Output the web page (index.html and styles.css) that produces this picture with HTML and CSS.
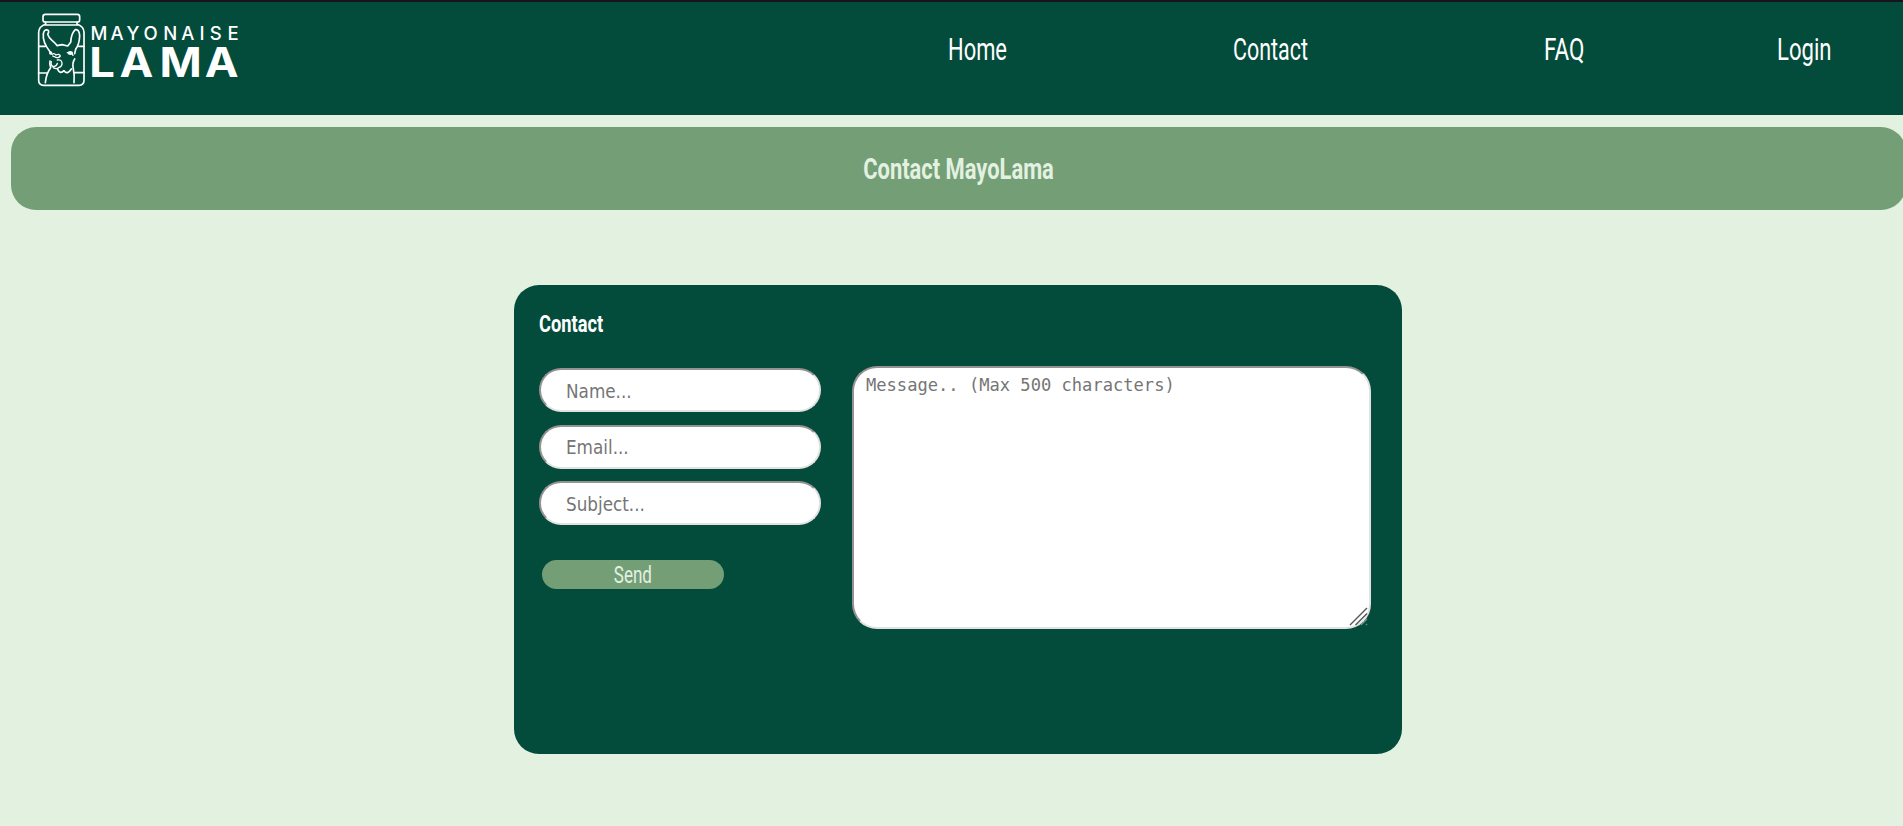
FILE: index.html
```html
<!DOCTYPE html>
<html lang="en">
<head>
<meta charset="utf-8">
<title>Contact MayoLama</title>
<link rel="stylesheet" href="styles.css">
</head>
<body>
<header class="header">
  <svg class="logo" viewBox="30 5 215 90" role="img" aria-label="Mayonaise Lama">
    <g class="jar" transform="translate(30 5) scale(.33333)">
      <rect x="39" y="28" width="110" height="23" rx="7"/>
      <path d="M47 51v6Q26 65 26 82V226Q26 241 41 241H147Q162 241 162 226V82Q162 65 141 57V51M41 60H147"/>
      <path d="M26 124H46M146 124H162M26 204H52M134 203H162"/>
      <path d="M60 140Q37 112 40 86Q43 72 53 75Q59 78 53 88Q56 98 66 106Q77 115 81 122L96 119L113 123L122 112Q124 84 136 74Q148 72 149 93Q148 118 137 133L134 146"/>
      <path d="M134 162Q126 174 130 192Q134 210 132 233M60 168Q58 178 62 188Q49 204 46 233M83 193Q90 209 102 197Q112 211 124 192"/>
      <path class="fine" d="M66 148Q72 143 78 150Q88 145 91 153Q86 160 78 157L68 153M64 170Q61 180 69 185Q80 184 82 175M82 165Q94 162 96 174Q97 184 86 188Q79 194 70 188"/>
      <ellipse class="solid" cx="121" cy="144" rx="8" ry="6"/>
      <ellipse class="solid" cx="62" cy="144" rx="5" ry="5"/>
      <path class="fine" d="M112 143H125L129 151"/>
    </g>
    <text class="logo-top" y="39.5" x="90.6 110.6 126.6 143.4 163.2 181.3 199.5 209.8 227.6">MAYONAISE</text>
    <text class="logo-main" transform="scale(1.12 1)" y="77.3" x="79.8 106.7 142.4 182.9">LAMA</text>
  </svg>
  <nav class="nav">
    <a class="home"><span>Home</span></a>
    <a class="contact"><span>Contact</span></a>
    <a class="faq"><span>FAQ</span></a>
    <a class="login"><span>Login</span></a>
  </nav>
</header>
<main>
  <h1 class="banner"><span>Contact MayoLama</span></h1>
  <form class="card">
    <h2 class="heading"><span>Contact</span></h2>
    <div class="columns">
      <div class="fields">
        <input class="field" type="text" placeholder="Name...">
        <input class="field" type="text" placeholder="Email...">
        <input class="field" type="text" placeholder="Subject...">
        <button class="send" type="button"><span>Send</span></button>
      </div>
      <div class="message-wrap">
        <textarea class="message" placeholder="Message.. (Max 500 characters)"></textarea>
        <svg class="grip" viewBox="0 0 20 20"><path d="M1 18L18 1M6.500 18L18 6.500"/><path class="faint" d="M12 18L18 12M17 18L18 17"/></svg>
      </div>
    </div>
  </form>
</main>
</body>
</html>
```
FILE: styles.css
```css
* { box-sizing: border-box; }
html, body { height: 100%; }
body {
  margin: 0;
  background: #e2f1e0;
  font-family: Roboto, "Liberation Sans", sans-serif;
  overflow: hidden;
}
.header {
  display: flex;
  height: 115px;
  background: #034c3c;
  border-top: 2px solid #15151b;
}
.logo {
  flex: none;
  width: 215px;
  height: 90px;
  margin: 3px 0 0 30px;
}
.jar { fill: none; stroke: #fff; stroke-width: 5; stroke-linecap: round; stroke-linejoin: round; }
.jar .fine { stroke-width: 4; }
.jar .solid { fill: #fff; stroke: none; }
.logo text { fill: #fff; font-family: Inter, sans-serif; }
.logo .logo-top { font-size: 18.5px; font-weight: 500; }
.logo .logo-main { font-size: 40.5px; font-weight: 700; }
.nav {
  display: grid;
  grid-template-columns: 285px 311px 233px 100px;
  margin-left: 703px;
  padding-top: 28px;
  color: #fff;
  font-size: 32px;
  line-height: 38px;
}
span { display: inline-block; transform-origin: left; white-space: nowrap; }
.nav span { font-weight: 400; }
.home span { transform: scaleX(.685); }
.contact span { transform: scaleX(.67); }
.faq span { transform: scaleX(.7); }
.login span { transform: scaleX(.69); }
.banner {
  display: flex;
  align-items: center;
  justify-content: center;
  width: 1895px;
  height: 83px;
  margin: 12px 0 0 11px;
  border-radius: 25px;
  background: #749e76;
  color: #e2f1e0;
  font-size: 30px;
}
.banner span { transform: scaleX(.73); transform-origin: center; }
.card {
  width: 888px;
  height: 469px;
  margin: 75px 0 0 514px;
  padding: 25px 0 0 25px;
  border-radius: 25px;
  background: #034c3c;
}
.heading { margin: 0; height: 56px; color: #fff; font-size: 24px; line-height: 28px; }
.heading span { transform: scaleX(.76); }
.columns { display: flex; gap: 31px; }
.fields { display: flex; flex-direction: column; align-items: flex-start; padding-top: 2px; }
.field {
  width: 282px;
  height: 44px;
  margin-bottom: 12.5px;
  padding: 2px 0 0 25px;
  border: 2px solid;
  border-color: #979292 #e3e1e1 #e3e1e1 #979292;
  border-radius: 25px;
  background: #fff;
  font: 18.7px "DejaVu Sans Condensed", "DejaVu Sans", sans-serif;
  font-stretch: condensed;
}
.field, .message { outline: none; }
::placeholder { color: #757575; opacity: 1; }
.send {
  width: 182px;
  height: 29px;
  margin: 22px 0 0 3px;
  padding: 2px 0 0;
  border: 0;
  border-radius: 15px;
  background: #749e76;
  color: #e2f1e0;
  font: 24px/27px Roboto, sans-serif;
}
.send span { transform: scaleX(.71); transform-origin: center; }
.message-wrap { position: relative; width: 519px; height: 263px; }
.message {
  display: block;
  width: 519px;
  height: 263px;
  padding: 6px 12px;
  border: 2px solid;
  border-color: #979292 #e3e1e1 #e3e1e1 #979292;
  border-radius: 25px;
  background: #fff;
  resize: none;
  font: 17.1px/23px "DejaVu Sans Mono", monospace;
}
.grip { position: absolute; right: 2px; bottom: 2px; width: 20px; height: 20px; fill: none; stroke: #55565b; stroke-width: 1.4; }
.grip .faint { stroke: #6d8f87; }
```
